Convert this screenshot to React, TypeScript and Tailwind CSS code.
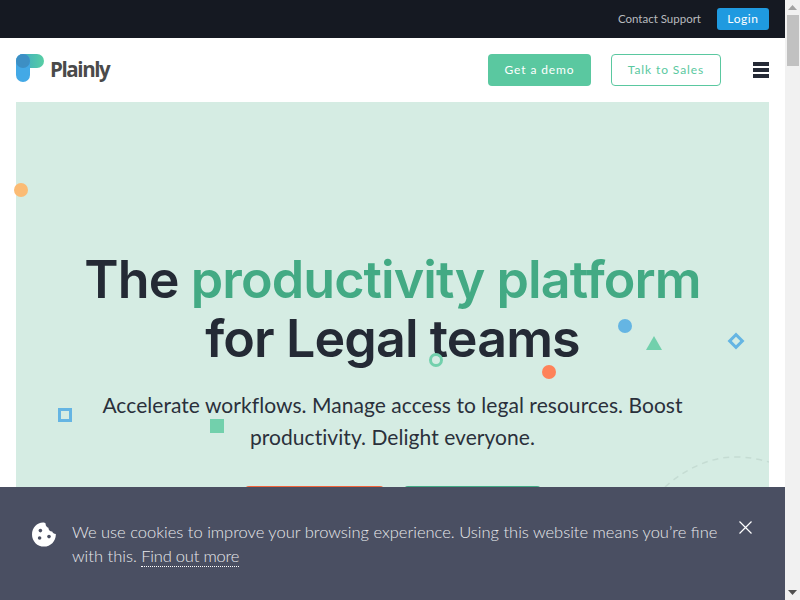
const bodyFont = "font-['Lato','Liberation_Sans',sans-serif]";

function CookieIcon() {
  return (
    <svg width="24" height="25" viewBox="0 0 24 25" className="shrink-0">
      <path
        d="M11 0.5C12 0.5 13 1 13.6 1.4C13.4 3.6 14.6 5.4 16.4 5.8C16.4 8 18.2 9.8 20.2 9.6C20.6 11.2 22 12 23.8 12C24.2 18.8 18.8 24.6 12 24.6C5.4 24.6 0 19.2 0 12.4C0 6 5 0.5 11 0.5Z"
        fill="#ffffff"
      />
      <circle cx="8.4" cy="8.6" r="1.8" fill="#4a4f62" />
      <circle cx="7.6" cy="16" r="1.8" fill="#4a4f62" />
      <circle cx="17" cy="14.6" r="1.8" fill="#4a4f62" />
    </svg>
  );
}

function Logo() {
  return (
    <div className="-mt-[4px] flex items-center gap-[6px]">
      <svg width="28" height="28" viewBox="0 0 28 28">
        <defs>
          <linearGradient id="logo-green" x1="0" x2="1" y1="0" y2="0">
            <stop offset="0" stopColor="#3aa3c8" />
            <stop offset="1" stopColor="#58cfa4" />
          </linearGradient>
        </defs>
        <rect x="0" y="0" width="28" height="14" rx="7" fill="url(#logo-green)" />
        <rect x="0" y="0" width="14" height="28" rx="7" fill="#43a9e6" />
        <circle cx="7" cy="7" r="7" fill="#3d8fc4" />
      </svg>
      <span className="mt-[3px] font-['Open_Sans',sans-serif] text-[20.5px] font-bold tracking-[-1.4px] text-[#4a4a4a]">Plainly</span>
    </div>
  );
}

function Shapes() {
  return (
    <>
      <div className="absolute left-[14px] top-[183px] h-[14px] w-[14px] rounded-full bg-[#fbbb74]" />
      <div className="absolute left-[618px] top-[319px] h-[14px] w-[14px] rounded-full bg-[#65b5e3]" />
      <div className="absolute left-[542px] top-[365px] h-[14px] w-[14px] rounded-full bg-[#fe8259]" />
      <div className="absolute left-[429px] top-[353px] h-[14px] w-[14px] rounded-full border-[3px] border-[#72d0ac]" />
      <div className="absolute left-[58px] top-[408px] h-[14px] w-[14px] border-[3px] border-[#65b5e3]" />
      <div className="absolute left-[210px] top-[419px] h-[14px] w-[14px] bg-[#72d0ac]" />
      <div className="absolute left-[730px] top-[335px] h-[12px] w-[12px] rotate-45 border-[3px] border-[#65b5e3]" />
      <svg className="absolute left-[646px] top-[336px]" width="16" height="14" viewBox="0 0 16 14">
        <path d="M8 0L16 14H0Z" fill="#72d0ac" />
      </svg>
      <svg className="absolute left-[660px] top-[452px]" width="109" height="36" viewBox="0 0 109 36">
        <path d="M5 35C25 17 50 5 75 5C88 5 99 7 109 10" fill="none" stroke="#c5dcd3" strokeWidth="1.5" strokeDasharray="6 5" />
      </svg>
    </>
  );
}

export default function App() {
  return (
    <div className={`flex h-[600px] w-[800px] overflow-hidden bg-white ${bodyFont}`}>
      <main className="relative h-full w-[785px] overflow-hidden">
        <div className="flex h-[38px] items-center justify-end gap-4 bg-[#151922] pr-4">
          <a className="text-[11.5px] text-[#b9bbbf]">Contact Support</a>
          <button className="h-[22px] w-[52px] rounded-[3px] bg-[#1f9ae0] text-[12px] tracking-[0.6px] text-white">Login</button>
        </div>

        <nav className="flex h-[64px] items-center px-4">
          <Logo />
          <div className="ml-auto flex items-center">
            <button className="h-[32px] w-[103px] rounded-[4px] bg-[#5ac8a0] text-[12px] tracking-[0.9px] text-white">Get a demo</button>
            <button className="ml-5 h-[32px] w-[110px] rounded-[4px] border border-[#5ac8a0] text-[12px] tracking-[0.9px] text-[#5ac8a0]">Talk to Sales</button>
            <div className="ml-8 flex w-4 flex-col gap-[2px]">
              <span className="h-[4px] bg-[#252a36]" />
              <span className="h-[4px] bg-[#252a36]" />
              <span className="h-[4px] bg-[#252a36]" />
            </div>
          </div>
        </nav>

        <section className="mx-4 flex h-[498px] flex-col items-center bg-[#d5ece3] pt-[148px] text-center">
          <h1 className="font-['Inter',sans-serif] text-[52px] font-semibold leading-[59px] tracking-[-0.9px] text-[#242a35]">
            The <span className="text-[#43aa84]">productivity platform</span>
            <br />
            for Legal teams
          </h1>
          <p className="mt-[21px] w-[620px] text-[21px] leading-[32px] tracking-[0.05px] text-[#2a303b]">
            Accelerate workflows. Manage access to legal resources. Boost productivity. Delight everyone.
          </p>
          <div className="mt-[33px] flex gap-5">
            <button className="h-[50px] w-[139px] rounded-[4px] bg-[#f0653a]" />
            <button className="h-[50px] w-[137px] rounded-[4px] bg-[#43aa84]" />
          </div>
        </section>

        <Shapes />

        <div className="absolute inset-x-0 bottom-0 flex h-[113px] items-start bg-[#4a4f62] pl-8 pt-[33px]">
          <div className="pt-[2px]">
            <CookieIcon />
          </div>
          <p className="ml-4 w-[660px] text-[16.5px] font-light leading-[24px] text-[#e8e9ec]">
            We use cookies to improve your browsing experience. Using this website means you’re fine with this.{" "}
            <a className="border-b border-dotted border-white tracking-[-0.2px]">Find out more</a>
          </p>
          <svg className="absolute left-[739px] top-[34px]" width="13" height="13" viewBox="0 0 13 13">
            <path d="M0.5 0.5L12.5 12.5M12.5 0.5L0.5 12.5" stroke="#ffffff" strokeWidth="1.2" fill="none" />
          </svg>
        </div>
      </main>

      <aside className="flex h-full w-[15px] flex-col items-center bg-[#f1f1f1]">
        <svg className="mt-[5px]" width="9" height="5" viewBox="0 0 9 5">
          <path d="M4.5 0L9 5H0Z" fill="#a3a3a3" />
        </svg>
        <div className="mt-[5px] h-[51px] w-[12px] bg-[#c1c1c1]" />
        <svg className="mb-[5px] mt-auto" width="9" height="5" viewBox="0 0 9 5">
          <path d="M0 0H9L4.5 5Z" fill="#505050" />
        </svg>
      </aside>
    </div>
  );
}
